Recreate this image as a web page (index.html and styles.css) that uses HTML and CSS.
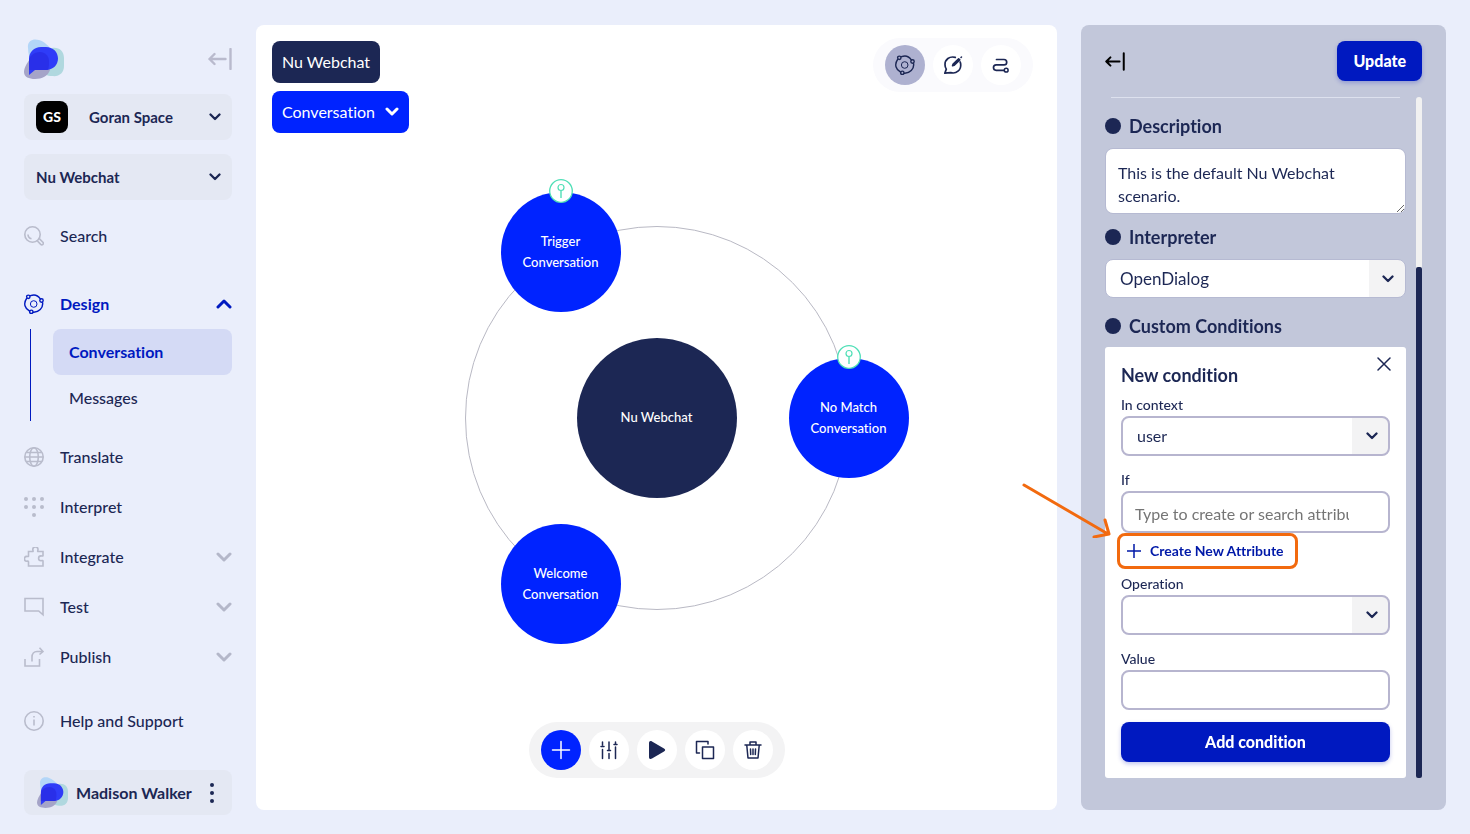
FILE: index.html
```html
<!DOCTYPE html>
<html lang="en">
<head>
    <meta charset="UTF-8">
    <meta name="viewport" content="width=device-width, initial-scale=1.0">
    <title>Nu Webchat - Conversation Designer</title>
    <link rel="stylesheet" href="styles.css">
</head>
<body>
    <!-- Shared icons -->
    <svg class="sprite" aria-hidden="true">
        <symbol id="logo" viewBox="0 0 40 40">
            <path d="M4 9C3 2 9-1 15 1c6 2 10 6 13 11l-2 13H8C6 20 4 15 4 9z" fill="#b3d6f8"/>
            <path d="M28 9c7-1 12 3 12 10v8c0 7-5 11-12 10-5 0-8-2-12-6z" fill="#b0d8df"/>
            <path d="M6 20c-3 4-6 9-6 13 0 5 5 7 11 7 7 0 13-3 15-9l-4-9z" fill="#a5a4c8"/>
            <path d="M5 36V20C5 13 10 8 17 8h5c7 0 12 5 12 11.500S29 31 22 31H11z" fill="#2f3cf8"/>
            <path d="M5 31V22c0-5 5-9 11-9 5 0 9 4 9 9 0 3 0 6-1 9z" fill="#2626e0" opacity=".6"/>
        </symbol>
        <symbol id="collapse" viewBox="0 0 24 22">
            <path d="M22.500 1v20M17.500 11H1.500M6.500 6 1.500 11l5 5" fill="none" stroke="currentColor" stroke-width="2.400" stroke-linecap="round" stroke-linejoin="round"/>
        </symbol>
        <symbol id="down" viewBox="0 0 12 8">
            <path d="M1.500 1.500 6 6l4.500-4.500" fill="none" stroke="currentColor" stroke-width="2.300" stroke-linecap="round" stroke-linejoin="round"/>
        </symbol>
        <symbol id="orbit" viewBox="0 0 20 20">
            <g fill="none" stroke="currentColor" stroke-width="1.400">
                <circle cx="9.700" cy="10" r="3.300" stroke-width="1"/>
                <circle cx="4.300" cy="2.800" r="1.700"/>
                <circle cx="17.500" cy="6.500" r="1.700"/>
                <circle cx="7.300" cy="17.800" r="1.700"/>
                <path d="M6.500 1.700c3.800-1.600 7.400-.3 9.800 3.100M18.600 8.700c.7 5.300-3.900 9.800-9.300 9.500M5.600 17.200C.8 14.500-.9 9.500 2.600 4.500" stroke-linecap="round"/>
            </g>
        </symbol>
        <symbol id="pin" viewBox="0 0 24 24">
            <circle cx="12" cy="12" r="11.300" fill="#fff" stroke="#50dfb7" stroke-width="1.300"/>
            <path d="M12 11.500V19" stroke="#50dfb7" stroke-width="1.400"/>
            <circle cx="12" cy="8.500" r="3" fill="none" stroke="#50dfb7" stroke-width="1.200"/>
        </symbol>
    </svg>

    <div class="layout">
        <aside class="sidebar">
            <div class="brand">
                <svg class="logo"><use href="#logo"/></svg>
                <button class="collapse" aria-label="Collapse menu"><svg width="24" height="22"><use href="#collapse"/></svg></button>
            </div>
            <button class="picker workspace">
                <span class="initials">GS</span>
                <span>Goran Space</span>
                <svg class="chevron"><use href="#down"/></svg>
            </button>
            <button class="picker scenario">
                <span>Nu Webchat</span>
                <svg class="chevron"><use href="#down"/></svg>
            </button>

            <nav>
                <a href="#" class="nav-item search">
                    <svg class="icon" viewBox="0 0 20 20"><circle cx="8.500" cy="8.500" r="7.700"/><path d="M4 8.500a4.500 4.500 0 0 0 3.500 4.300M12.700 14.200l4 4.200c1.500 1.400 3.600-.6 2.200-2.100l-4.100-4.200"/></svg>
                    <span>Search</span>
                </a>
                <a href="#" class="nav-item design">
                    <svg class="nav-orbit"><use href="#orbit"/></svg>
                    <span>Design</span>
                    <svg class="arrow" viewBox="0 0 16 10"><path d="M2 8l6-6 6 6"/></svg>
                </a>
                <div class="subnav">
                    <a href="#" class="current">Conversation</a>
                    <a href="#">Messages</a>
                </div>
                <a href="#" class="nav-item translate">
                    <svg class="icon" viewBox="0 0 20 20"><circle cx="10" cy="10" r="9.200"/><ellipse cx="10" cy="10" rx="4.300" ry="9.200"/><path d="M1 10h18M2.500 5.500h15M2.500 14.500h15"/></svg>
                    <span>Translate</span>
                </a>
                <a href="#" class="nav-item">
                    <svg class="icon dots" viewBox="0 0 20 20"><circle cx="2" cy="2" r="2"/><circle cx="10" cy="2" r="2"/><circle cx="18" cy="2" r="2"/><circle cx="2" cy="10" r="2"/><circle cx="10" cy="10" r="2"/><circle cx="18" cy="10" r="2"/><circle cx="10" cy="18" r="2"/></svg>
                    <span>Interpret</span>
                </a>
                <a href="#" class="nav-item">
                    <svg class="icon" viewBox="0 0 20 20"><path d="M4.500 4.500h4c1.200 0 .3-1 .3-2a2.600 2.600 0 0 1 5.200 0c0 1-.9 2 .3 2H19v4c0 1-1 .4-2 .4a2.400 2.400 0 0 0 0 4.800c1 0 2-.8 2 .3v5H4.500v-4c0-1.200-.8-.8-1.700-.8a2.400 2.400 0 0 1 0-4.800c.9 0 1.700.6 1.700-.5z"/></svg>
                    <span>Integrate</span>
                    <svg class="arrow" viewBox="0 0 16 10"><path d="M2 2l6 6 6-6"/></svg>
                </a>
                <a href="#" class="nav-item">
                    <svg class="icon" viewBox="0 0 20 20"><path d="M1 1.500h18v16.300L14.700 14H1z"/></svg>
                    <span>Test</span>
                    <svg class="arrow" viewBox="0 0 16 10"><path d="M2 2l6 6 6-6"/></svg>
                </a>
                <a href="#" class="nav-item">
                    <svg class="icon" viewBox="0 0 20 20"><path d="M1 12v7h14.500v-7M8 14.500V10c0-3.500 2-5.500 5-5.500h5.500M15.500.8 19 4.500l-3.500 3"/></svg>
                    <span>Publish</span>
                    <svg class="arrow" viewBox="0 0 16 10"><path d="M2 2l6 6 6-6"/></svg>
                </a>
                <a href="#" class="nav-item help">
                    <svg class="icon" viewBox="0 0 20 20"><circle cx="10" cy="10" r="9.200"/><path d="M10 8.500v6M10 5v1.500"/></svg>
                    <span>Help and Support</span>
                </a>
            </nav>

            <button class="user">
                <svg class="avatar"><use href="#logo"/></svg>
                <span>Madison Walker</span>
                <svg class="more" viewBox="0 0 4 20"><circle cx="2" cy="2" r="2"/><circle cx="2" cy="10" r="2"/><circle cx="2" cy="18" r="2"/></svg>
            </button>
        </aside>

        <main class="canvas">
            <div class="canvas-top">
                <div class="crumbs">
                    <button class="crumb dark">Nu Webchat</button>
                    <button class="crumb">Conversation <svg width="14" height="10" viewBox="0 0 14 10"><path d="M2 2l5 5 5-5"/></svg></button>
                </div>
                <div class="toolbar views">
                    <button class="tool selected" aria-label="Conversation view"><svg width="20" height="20"><use href="#orbit"/></svg></button>
                    <button class="tool" aria-label="Message view">
                        <svg width="20" height="20" viewBox="0 0 20 20" class="line"><path d="M12.300 2.400C6.500.8 1.800 4.600 2 9.700c0 2 .5 3.200 1.300 4.400L1.800 18.200l5.900-.6c5.500 1.700 10.600-2.700 10-8.300 0-1-.3-1.600-.6-2.300" stroke-width="1.700"/><path d="M9.500 10.800l.6-1.700 5.500-5.400 1.200 1.200-5.500 5.400z" fill="currentColor"/><path d="M18 2.500l.5-.5"/></svg>
                    </button>
                    <button class="tool" aria-label="Flow view">
                        <svg width="20" height="20" viewBox="0 0 20 20" class="line"><path d="M5.500 4.500h7.500a2.700 2.700 0 0 1 0 5.400H5.200a2.700 2.700 0 0 0 0 5.400H13" stroke-width="1.700"/><circle cx="15.200" cy="15.200" r="1.900"/></svg>
                    </button>
                </div>
            </div>

            <div class="diagram">
                <div class="node root">Nu Webchat</div>
                <div class="node trigger"><svg class="pin"><use href="#pin"/></svg>Trigger<br>Conversation</div>
                <div class="node no-match"><svg class="pin"><use href="#pin"/></svg>No Match<br>Conversation</div>
                <div class="node welcome">Welcome<br>Conversation</div>
            </div>

            <div class="toolbar actions">
                <button class="tool add" aria-label="Add"><svg width="20" height="20" viewBox="0 0 20 20" class="line"><path d="M10 1.500v17M1.500 10h17"/></svg></button>
                <button class="tool" aria-label="Settings"><svg width="20" height="20" viewBox="0 0 20 20" class="line"><path d="M3.500 2v3M2 6.500h3M3.500 9.500v9M10 2v7.500M8.500 10.500h3M10 13.500v5M16.500 2v1.500M15 4.500h3M16.500 7v11.500"/></svg></button>
                <button class="tool" aria-label="Preview"><svg width="20" height="20" viewBox="0 0 20 20"><path d="M2 3c0-2 1.500-2.500 3-1.600L17 8.500c1.600 1 1.600 2 0 3L5 18.600c-1.500.9-3 .4-3-1.600z" fill="currentColor"/></svg></button>
                <button class="tool" aria-label="Duplicate"><svg width="20" height="20" viewBox="0 0 20 20" class="line"><path d="M4.500 13H1.500V1.500H13V4"/><rect x="7.500" y="7" width="11" height="11.500"/></svg></button>
                <button class="tool" aria-label="Delete"><svg width="20" height="20" viewBox="0 0 20 20" class="line"><path d="M2 5h16M7 5V2h6v3M3.800 5.500 5 18h10l1.200-12.500M7.500 9l.2 5.500M10 9v5.500M12.500 9l-.2 5.500"/></svg></button>
            </div>
        </main>

        <aside class="panel">
            <header class="panel-header">
                <button class="collapse" aria-label="Close panel"><svg width="20" height="19"><use href="#collapse"/></svg></button>
                <button class="primary">Update</button>
            </header>
            <div class="panel-body">
                <div class="fields">
                    <hr>
                    <label class="heading" for="description">Description</label>
                    <textarea id="description">This is the default Nu Webchat scenario.</textarea>
                    <label class="heading" for="interpreter">Interpreter</label>
                    <div class="select-box plain">
                        <select id="interpreter"><option>OpenDialog</option></select>
                        <svg class="chevron"><use href="#down"/></svg>
                    </div>
                    <h2 class="heading conditions">Custom Conditions</h2>
                    <form class="card">
                        <button type="button" class="close" aria-label="Close"><svg width="14" height="14" viewBox="0 0 14 14" class="line"><path d="M1 1l12 12M13 1 1 13"/></svg></button>
                        <h3>New condition</h3>
                        <label for="context">In context</label>
                        <div class="select-box">
                            <select id="context"><option>user</option></select>
                            <svg class="chevron"><use href="#down"/></svg>
                        </div>
                        <label for="attribute">If</label>
                        <input type="text" id="attribute" class="attribute" placeholder="Type to create or search attributes">
                        <div class="create-row">
                            <button type="button" class="create">
                                <svg width="14" height="14" viewBox="0 0 14 14"><path d="M7 0v14M0 7h14"/></svg>
                                Create New Attribute
                            </button>
                            <svg class="pointer" width="90" height="56" viewBox="0 0 90 56"><path d="M3 3l84 49M84 38l4 14-15 3"/></svg>
                        </div>
                        <label for="operation">Operation</label>
                        <div class="select-box">
                            <select id="operation"><option></option></select>
                            <svg class="chevron"><use href="#down"/></svg>
                        </div>
                        <label for="value">Value</label>
                        <input type="text" id="value">
                        <button type="button" class="primary wide">Add condition</button>
                    </form>
                </div>
                <div class="scrollbar"><div class="thumb"></div></div>
            </div>
        </aside>
    </div>
</body>
</html>
```
FILE: styles.css
```css
* { box-sizing: border-box; }
body { margin: 0; background: #eaeefb; color: #1c2754; font-family: Lato, "Open Sans", sans-serif; font-size: 16px; font-variant-ligatures: none; line-height: 20px; }
button, input, select, textarea { font: inherit; font-variant-ligatures: none; color: inherit; }
button { border: none; background: none; padding: 0; cursor: pointer; }
a { color: inherit; text-decoration: none; }
svg { display: block; flex: none; }
.sprite { position: absolute; width: 0; height: 0; }
.line { fill: none; stroke: currentColor; stroke-width: 1.5; stroke-linecap: round; stroke-linejoin: round; }
.chevron { width: 12px; height: 8px; }

.layout { display: grid; grid-template-columns: 208px 1fr 365px; gap: 24px; min-height: 100vh; padding: 25px 24px 19px; }

/* Sidebar */
.sidebar { display: flex; flex-direction: column; padding-top: 14px; }
.brand { display: flex; align-items: center; justify-content: space-between; margin-bottom: 15px; }
.brand .collapse { color: #b9bacd; }
.logo { width: 40px; height: 40px; }
.picker { display: flex; align-items: center; gap: 21px; height: 46px; padding: 0 11px 0 12px; border-radius: 8px; background: #e4e8f3; font-size: 15px; font-weight: 700; }
.picker .chevron { margin-left: auto; }
.workspace { margin-bottom: 14px; }
.initials { width: 32px; height: 32px; border-radius: 8px; background: #000; color: #fff; font-size: 14px; font-weight: 900; line-height: 32px; }

.nav-item { display: flex; align-items: center; gap: 16px; height: 50px; font-weight: 500; }
.nav-item .icon { width: 20px; height: 20px; fill: none; stroke: #b9bccc; stroke-width: 1.6; }
.nav-item .dots { fill: #b9bccc; stroke: none; }
.nav-orbit { width: 20px; height: 20px; }
.arrow { width: 16px; height: 10px; margin-left: auto; fill: none; stroke: #b4b7c9; stroke-width: 3; stroke-linecap: round; stroke-linejoin: round; }
.search { margin-top: 11px; }
.design { margin-top: 18px; color: #0019c0; font-weight: 700; }
.design .arrow { stroke: #0019c0; }
.subnav { margin-left: 6px; padding-left: 22px; border-left: 1px solid #0019c0; }
.subnav a { display: block; padding: 13px 16px; border-radius: 8px; font-weight: 500; }
.subnav .current { background: #d4daf5; color: #0019c0; font-weight: 700; }
.translate { margin-top: 11px; }
.help { margin-top: 14px; }

.user { display: flex; align-items: center; gap: 8px; height: 45px; margin-top: auto; padding: 0 18px 0 13px; border-radius: 8px; background: #e4e8f3; font-weight: 700; }
.avatar { width: 31px; height: 31px; }
.more { width: 4px; height: 20px; margin-left: auto; fill: #1c2754; }

/* Canvas */
.canvas { display: flex; flex-direction: column; align-items: center; justify-content: space-between; position: relative; margin-bottom: 5px; padding: 13px 16px 32px; border-radius: 8px; background: #fff; }
.canvas-top { display: flex; align-items: flex-start; justify-content: space-between; align-self: stretch; }
.crumbs { display: flex; flex-direction: column; align-items: flex-start; gap: 8px; padding-top: 3px; }
.crumb { display: flex; align-items: center; gap: 10px; height: 42px; padding: 0 10px; border-radius: 8px; background: #0023ff; color: #fff; }
.crumb svg { fill: none; stroke: #fff; stroke-width: 3; stroke-linecap: round; stroke-linejoin: round; }
.crumb.dark { background: #1c2754; }
.toolbar { display: flex; gap: 8px; border-radius: 28px; }
.views { margin-right: 8px; padding: 7px 12px; background: #fafafd; }
.actions { padding: 8px 12px; background: #f3f3f4; }
.tool { display: grid; place-items: center; width: 40px; height: 40px; border-radius: 50%; background: #fff; color: #1c2754; }
.selected { background: #aeb1d0; }
.add { background: #0023ff; color: #fff; }

.diagram { position: absolute; top: 50%; left: 50%; width: 384px; height: 384px; border: 1px solid #b9b9c4; border-radius: 50%; transform: translate(-50%, -50%); }
.node { position: absolute; display: flex; align-items: center; justify-content: center; width: 120px; height: 120px; border-radius: 50%; background: #0023ff; color: #fff; font-size: 13px; font-weight: 500; line-height: 21px; text-align: center; }
.root { top: 111px; left: 111px; width: 160px; height: 160px; background: #1c2754; }
.trigger { top: -35px; left: 35px; }
.no-match { top: 131px; left: 323px; }
.welcome { top: 297px; left: 35px; }
.pin { position: absolute; top: -13px; left: 48px; width: 24px; height: 24px; }

/* Properties panel */
.panel { margin-bottom: 5px; padding: 16px 24px 32px; border-radius: 8px; background: #c2c7da; }
.panel-header { display: flex; align-items: center; justify-content: space-between; margin-bottom: 16px; }
.panel-header .collapse { color: #000; }
.primary { height: 40px; padding: 0 16px; border-radius: 8px; background: #0019c0; color: #fff; font-weight: 900; box-shadow: 0 2px 4px rgba(0, 25, 192, 0.25); }
.panel-body { display: grid; grid-template-columns: 1fr 6px; gap: 10px; }
.fields hr { height: 1px; margin: 0 6px 16px; border: none; background: #dde1ee; }
.heading { display: flex; align-items: center; gap: 8px; margin: 11px 0 10px; font-size: 18px; font-weight: 700; line-height: 24px; }
.heading::before { content: ""; width: 16px; height: 16px; border-radius: 50%; background: #1c2754; }
.conditions { margin: 16px 0 9px; }
textarea { display: block; width: 100%; height: 66px; padding: 12px; border: 1px solid #b6bad2; border-radius: 8px; background: #fff; line-height: 23px; outline: none; }
.select-box { position: relative; }
.select-box .chevron { position: absolute; top: 16px; right: 12px; pointer-events: none; }
select, input { display: block; width: 100%; height: 40px; padding: 0 14px; border: 2px solid #b7b5cf; border-radius: 8px; background: #fff; outline: none; }
select { appearance: none; background: linear-gradient(to left, #f3f3f4 36px, #fff 36px); }
.plain select { height: 39px; border: 1px solid #b6bad2; font-size: 17px; }

.card { position: relative; padding: 16px; border-radius: 3px; background: #fff; }
.card h3 { margin: 0 0 8px; font-size: 18px; font-weight: 700; line-height: 24px; }
.card label { display: block; margin: 14px 0 1px; font-size: 14px; font-weight: 500; }
.card h3 + label { margin-top: 0; }
.close { position: absolute; top: 10px; right: 15px; }
.attribute { height: 42px; padding: 2px 39px 0 12px; }
.attribute::placeholder { color: #757575; }
.create-row { position: relative; margin-left: -4px; }
.create { display: flex; align-items: center; gap: 9px; height: 36px; padding: 0 11px 0 7px; border: 3px solid #f26a0f; border-radius: 8px; color: #0019a8; font-size: 14px; font-weight: 700; }
.create svg { fill: none; stroke: currentColor; stroke-width: 1.5; }
.pointer { position: absolute; top: -51px; left: -96px; fill: none; stroke: #f26a0f; stroke-width: 3; stroke-linecap: round; stroke-linejoin: round; pointer-events: none; }
.card .create-row + label { margin-top: 5px; }
.wide { display: block; width: 100%; margin-top: 12px; }

.scrollbar { display: flex; align-items: flex-end; border-radius: 3px; background: #f1f1f1; }
.thumb { width: 6px; height: 75%; border-radius: 2px; background: #1c2754; }
```
